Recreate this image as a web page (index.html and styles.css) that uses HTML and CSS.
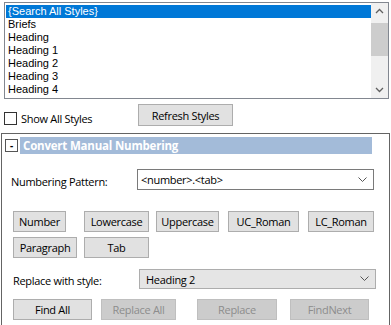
FILE: index.html
```html
<!DOCTYPE html>
<html lang="en">
<head>
  <meta charset="UTF-8">
  <meta name="viewport" content="width=device-width, initial-scale=1.0">
  <title>Styles Pane</title>
  <link rel="stylesheet" href="styles.css">
</head>
<body>

  <div class="style-list">
    <ul class="items">
      <li class="selected">{Search All Styles}</li>
      <li>Briefs</li>
      <li>Heading</li>
      <li>Heading 1</li>
      <li>Heading 2</li>
      <li>Heading 3</li>
      <li>Heading 4</li>
    </ul>
    <div class="scrollbar">
      <svg class="arrow" width="17" height="17" viewBox="0 0 17 17"><polyline points="5,10 8.5,6.5 12,10" fill="none" stroke="#606060" stroke-width="1.3"/></svg>
      <div class="track"><div class="thumb"></div></div>
      <svg class="arrow" width="17" height="17" viewBox="0 0 17 17"><polyline points="5,7 8.5,10.5 12,7" fill="none" stroke="#606060" stroke-width="1.3"/></svg>
    </div>
  </div>

  <div class="toolbar">
    <label class="check"><span class="box"></span>Show All Styles</label>
    <button class="btn refresh">Refresh Styles</button>
  </div>

  <div class="group">
    <div class="group-header">
      <span class="toggle">-</span>
      <div class="title">Convert Manual Numbering</div>
    </div>

    <div class="field pattern-row">
      <span class="field-label">Numbering Pattern:</span>
      <div class="combo">
        <span>&lt;number&gt;.&lt;tab&gt;</span>
        <svg class="chevron" width="9" height="6" viewBox="0 0 9 6"><polyline points="0.5,0.5 4.5,4.5 8.5,0.5" fill="none" stroke="#555" stroke-width="1"/></svg>
      </div>
    </div>

    <div class="token-row first">
      <button class="btn w-number">Number</button>
      <button class="btn w-lower">Lowercase</button>
      <button class="btn w-upper">Uppercase</button>
      <button class="btn w-ucroman">UC_Roman</button>
      <button class="btn w-lcroman">LC_Roman</button>
    </div>
    <div class="token-row second">
      <button class="btn w-para">Paragraph</button>
      <button class="btn w-tab">Tab</button>
    </div>

    <div class="field replace-row">
      <span class="field-label">Replace with style:</span>
      <div class="combo readonly">
        <span>Heading 2</span>
        <svg class="chevron" width="9" height="6" viewBox="0 0 9 6"><polyline points="0.5,0.5 4.5,4.5 8.5,0.5" fill="none" stroke="#555" stroke-width="1"/></svg>
      </div>
    </div>

    <div class="action-row">
      <button class="btn action">Find All</button>
      <button class="btn action disabled">Replace All</button>
      <button class="btn action disabled">Replace</button>
      <button class="btn action disabled">FindNext</button>
    </div>
  </div>

</body>
</html>
```

FILE: styles.css
```css
* { box-sizing: border-box; }
body { margin: 0; background: #fff; font-family: "Open Sans", "Noto Sans", sans-serif; font-size: 11px; letter-spacing: -0.3px; color: #000; width: 391px; height: 325px; overflow: hidden; }

/* style list */
.style-list { display: flex; margin: 2px 2px 0 4px; height: 97px; border: 1px solid #828790; background: #fff; }
.items { flex: 1; list-style: none; margin: 0; padding: 2px 0 0 1px; font-family: "Liberation Sans", Arial, sans-serif; font-size: 11px; letter-spacing: 0; }
.items li { height: 13px; line-height: 13px; padding-left: 2px; }
.items li.selected { background: #0078d7; color: #fff; }
.scrollbar { width: 17px; display: flex; flex-direction: column; background: #f0f0f0; }
.arrow { display: block; }
.track { flex: 1; }
.thumb { height: 33px; margin-top: 3px; background: #cdcdcd; }

/* toolbar */
.toolbar { display: flex; align-items: flex-start; padding: 5px 0 0 4px; height: 34px; }
.check { display: flex; align-items: center; width: 134px; margin-top: 7px; gap: 4px; }
.box { width: 13px; height: 13px; border: 1px solid #333; background: #fff; }
.btn { font-family: inherit; font-size: 11px; letter-spacing: -0.3px; color: #000; background: #e1e1e1; border: 1px solid #adadad; height: 21px; padding: 0; }
.refresh { width: 95px; height: 22px; }

/* group */
.group { margin-left: 1px; width: 389px; height: 200px; border: 1px solid #646464; border-bottom: none; padding: 3px 0 0 2px; }
.group-header { display: flex; align-items: center; gap: 2px; }
.toggle { width: 13px; height: 13px; margin-left: 1px; border: 1px solid #555; background: #fff; font-size: 10px; line-height: 10px; text-align: center; font-weight: bold; }
.title { width: 352px; height: 17px; background: #a3bbd9; color: #fff; font-weight: bold; font-size: 11.5px; letter-spacing: -0.2px; line-height: 17px; padding-left: 3px; }

.field { display: flex; align-items: center; padding-left: 7px; }
.field-label { width: 126px; }
.combo { width: 237px; height: 21px; border: 1px solid #7a7a7a; background: #fff; display: flex; align-items: center; justify-content: space-between; padding: 0 6px 0 3px; }
.combo.readonly { background: #e5e5e5; border-color: #adadad; height: 20px; padding-left: 6px; }
.pattern-row { margin-top: 15px; }
.pattern-row .field-label { margin-top: 4px; }

.token-row { display: flex; padding-left: 9px; }
.token-row.first { margin-top: 21px; }
.token-row.second { margin-top: 5px; }
.w-number { width: 53px; }
.w-lower { width: 65px; margin-left: 18px; }
.w-upper { width: 63px; margin-left: 7px; }
.w-ucroman { width: 71px; margin-left: 9px; }
.w-lcroman { width: 66px; margin-left: 9px; }
.w-para { width: 64px; }
.w-tab { width: 65px; margin-left: 7px; }

.replace-row { margin-top: 11px; }
.replace-row .field-label { margin-top: 3px; width: 128px; padding-left: 2px; }

.action-row { display: flex; padding-left: 9px; margin-top: 10px; }
.action { width: 79px; }
.action + .action { margin-left: 9px; }
.action:nth-child(2) { width: 75px; }
.action:nth-child(3) { width: 80px; margin-left: 21px; }
.action:nth-child(4) { margin-left: 13px; }
.disabled { background: #cccccc; border-color: #bfbfbf; color: #8d8d8d; }
```
